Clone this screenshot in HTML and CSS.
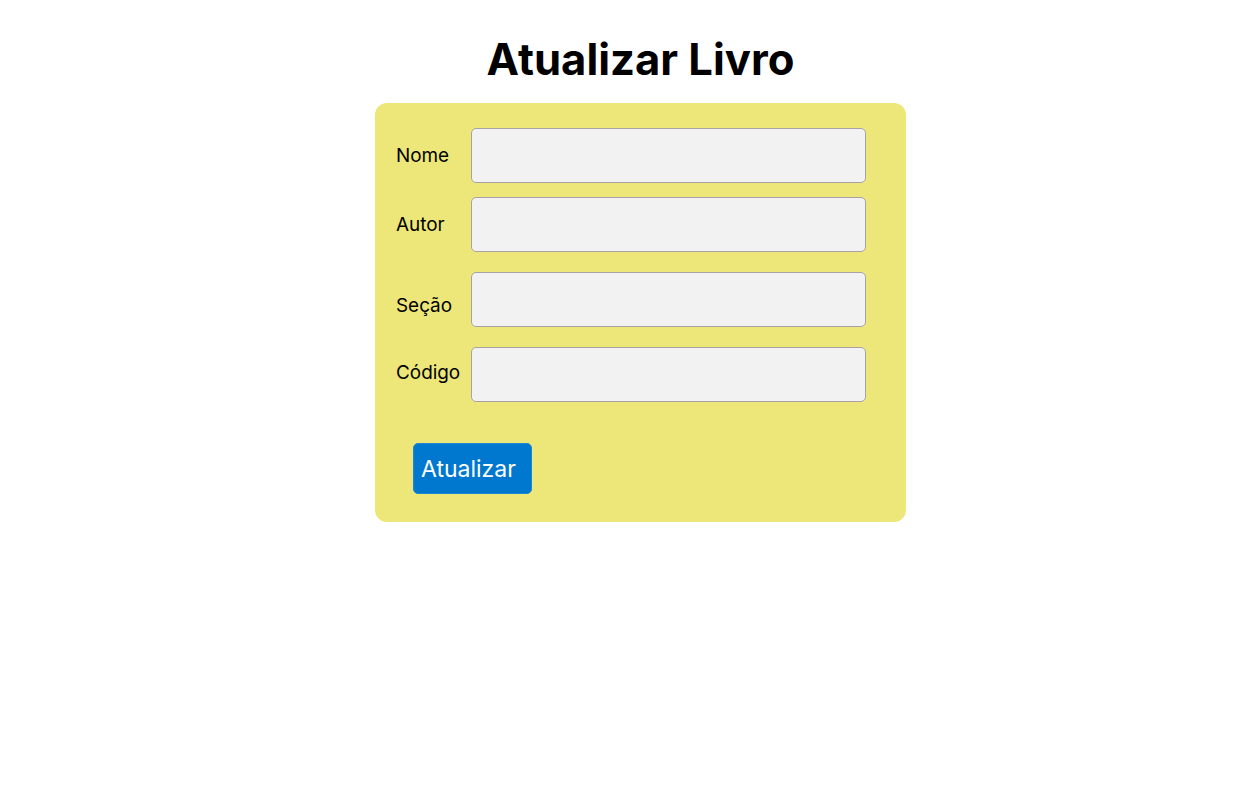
FILE: index.html
```html
<!DOCTYPE html>
<html lang="pt">
<head>
<meta charset="utf-8">
<title>Atualizar Livro</title>
<link rel="stylesheet" href="styles.css">
</head>
<body>
<main class="page">
  <h1 class="title">Atualizar Livro</h1>
  <form class="card">
    <div class="row row-nome">
      <label class="label" for="nome">Nome</label>
      <input class="field" id="nome" type="text">
    </div>
    <div class="row row-autor">
      <label class="label" for="autor">Autor</label>
      <input class="field" id="autor" type="text">
    </div>
    <div class="row row-secao">
      <label class="label label-low" for="secao">Seção</label>
      <input class="field" id="secao" type="text">
    </div>
    <div class="row row-codigo">
      <label class="label label-high" for="codigo">Código</label>
      <input class="field" id="codigo" type="text">
    </div>
    <div class="actions">
      <button class="btn" type="button">Atualizar</button>
    </div>
  </form>
</main>
</body>
</html>
```

FILE: styles.css
```css
html, body {
  margin: 0;
  padding: 0;
  background: #ffffff;
}
body {
  font-family: Inter, "Noto Sans", "Liberation Sans", sans-serif;
  color: #000;
}
.page {
  display: flex;
  flex-direction: column;
  align-items: center;
  padding-left: 21px;
}
.title {
  margin: 32px 0 0 0;
  font-size: 43.6px;
  font-weight: 700;
  line-height: 56px;
  height: 71px;
}
.card {
  width: 531px;
  box-sizing: border-box;
  background: #ede779;
  border-radius: 12px;
  padding: 25px 0 28px 21px;
  display: flex;
  flex-direction: column;
}
.row {
  display: flex;
  align-items: center;
}
.row-autor { margin-top: 14px; }
.row-secao { margin-top: 20px; }
.row-codigo { margin-top: 20px; }
.label {
  width: 75px;
  font-size: 18.9px;
  line-height: 22px;
}
.label-low {
  position: relative;
  top: 6px;
}
.label-high {
  position: relative;
  top: -2px;
}
.field {
  width: 395px;
  height: 55px;
  box-sizing: border-box;
  margin: 0;
  background: #f2f2f2;
  border: 1.5px solid #a8a2a8;
  border-radius: 5px;
  font-family: inherit;
  font-size: 18px;
  padding: 0 10px;
}
.actions {
  margin-top: 41px;
  padding-left: 17px;
}
.btn {
  width: 119px;
  height: 51px;
  background: #0078d0;
  border: 1px solid #1a86d4;
  border-radius: 5px;
  color: #fff;
  font-family: inherit;
  font-size: 23px;
  padding: 0 0 0 7px;
  text-align: left;
}
```
